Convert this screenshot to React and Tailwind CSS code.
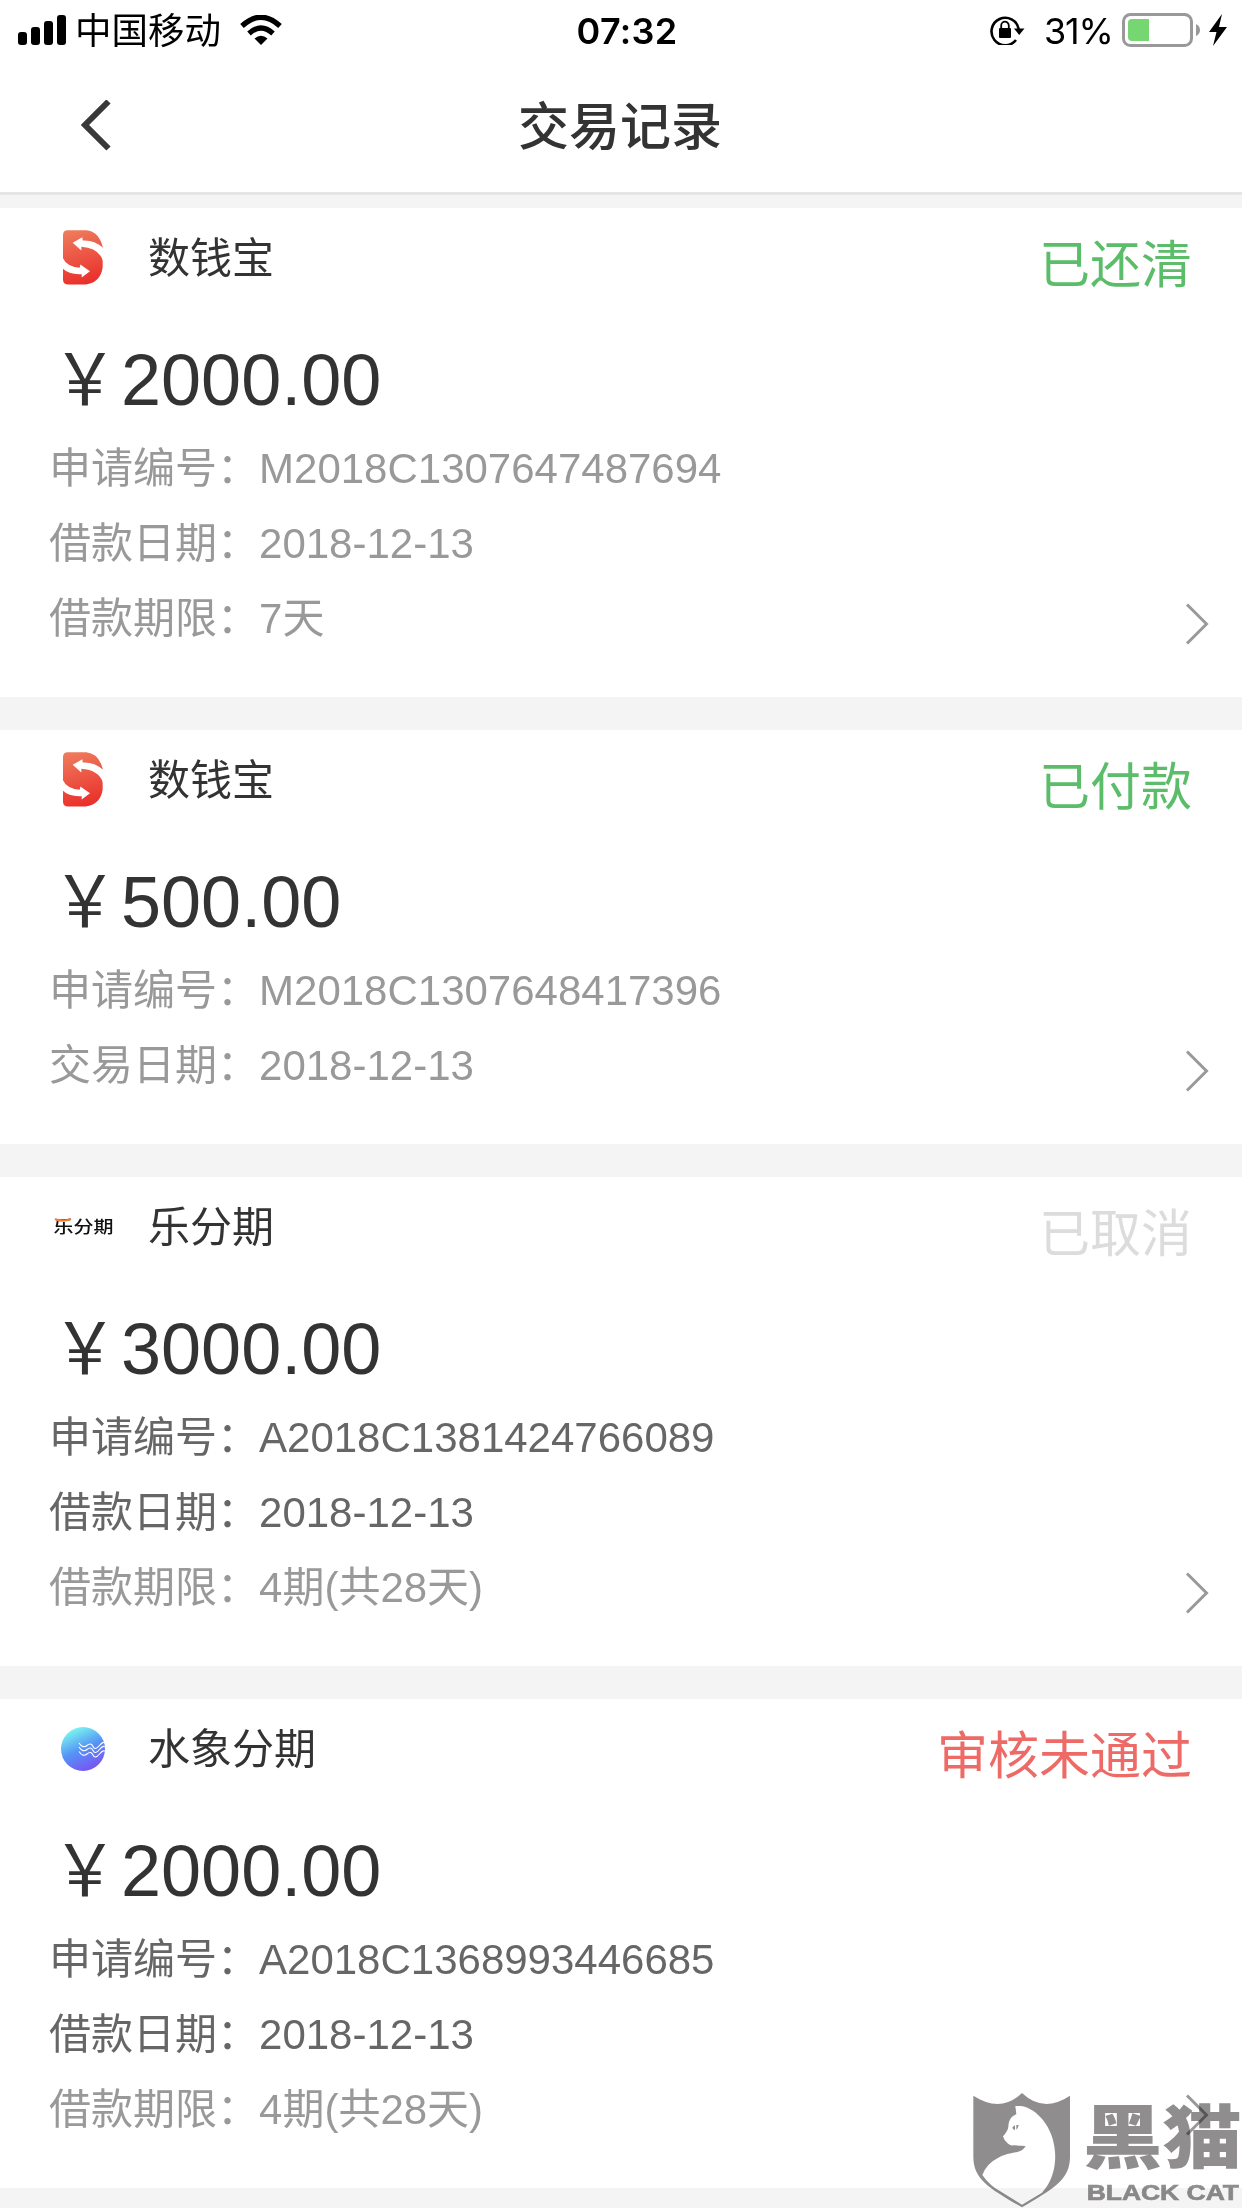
const records = [
  {
    name: '数钱宝',
    logo: 'shuqianbao',
    status: '已还清',
    statusColor: 'text-[#5bbd6a]',
    amount: '2000.00',
    rows: [
      { label: '申请编号', value: 'M2018C1307647487694' },
      { label: '借款日期', value: '2018-12-13' },
      { label: '借款期限', value: '7天' },
    ],
  },
  {
    name: '数钱宝',
    logo: 'shuqianbao',
    status: '已付款',
    statusColor: 'text-[#5bbd6a]',
    amount: '500.00',
    rows: [
      { label: '申请编号', value: 'M2018C1307648417396' },
      { label: '交易日期', value: '2018-12-13' },
    ],
  },
  {
    name: '乐分期',
    logo: 'lefenqi',
    status: '已取消',
    statusColor: 'text-[#dcdcdc]',
    amount: '3000.00',
    rows: [
      { label: '申请编号', value: 'A2018C1381424766089', dark: true },
      { label: '借款日期', value: '2018-12-13', dark: true },
      { label: '借款期限', value: '4期(共28天)' },
    ],
  },
  {
    name: '水象分期',
    logo: 'shuixiang',
    status: '审核未通过',
    statusColor: 'text-[#ed6a66]',
    amount: '2000.00',
    rows: [
      { label: '申请编号', value: 'A2018C1368993446685', dark: true },
      { label: '借款日期', value: '2018-12-13', dark: true },
      { label: '借款期限', value: '4期(共28天)' },
    ],
  },
];

function ShuqianbaoLogo() {
  return (
    <svg width="40" height="55" viewBox="0 0 120 164">
      <defs>
        <linearGradient id="sqb" x1="0.3" y1="0" x2="0.5" y2="1">
          <stop offset="0" stopColor="#ee7a5c" />
          <stop offset="1" stopColor="#ea2f2a" />
        </linearGradient>
      </defs>
      <path
        d="M14 0H70Q108 4 119 50V112Q112 158 68 163H16Q0 163 0 148V14Q0 0 14 0Z"
        fill="url(#sqb)"
      />
      <path d="M29 38L58 21L59 31Q94 29 120 53V92Q108 54 55 50V61Z" fill="#fff" />
      <path d="M81 123L56 142V132Q18 134 0 116V84Q10 108 50 113L52 103Z" fill="#fff" />
    </svg>
  );
}

function LefenqiLogo() {
  return (
    <svg className="overflow-visible" width="60" height="28" viewBox="0 0 60 28">
      <text
        transform="translate(0.5 20) scale(1 0.84)"
        fontSize="20"
        fontWeight="500"
        fill="#111"
        fontFamily='"Noto Sans CJK SC", sans-serif'
      >
        乐分期
      </text>
      <path d="M2 6Q9 9.500 18 6" stroke="#f47b30" strokeWidth="2" fill="none" />
    </svg>
  );
}

function ShuixiangLogo() {
  return (
    <svg width="44" height="44" viewBox="0 0 44 44">
      <defs>
        <linearGradient id="sx" x1="0.25" y1="0.02" x2="0.7" y2="1">
          <stop offset="0" stopColor="#7cfbf0" />
          <stop offset="0.5" stopColor="#5593f6" />
          <stop offset="1" stopColor="#7c4ff3" />
        </linearGradient>
        <clipPath id="sxClip">
          <circle cx="22" cy="22" r="22" />
        </clipPath>
      </defs>
      <circle cx="22" cy="22" r="22" fill="url(#sx)" />
      <g clipPath="url(#sxClip)" stroke="#fff" strokeWidth="1.1" fill="none">
        <path d="M18 16Q22 22 26 18.500T32 19.500T38.500 18.500T45 17" />
        <path d="M18 20Q22 26 26 22.500T32 23.500T38.500 22.500T45 21" />
        <path d="M18 24.500Q22 30.500 26 27T32 28T38.500 27T45 25.500" />
      </g>
    </svg>
  );
}

const logos = {
  shuqianbao: <ShuqianbaoLogo />,
  lefenqi: <LefenqiLogo />,
  shuixiang: <ShuixiangLogo />,
};

function StatusBar() {
  return (
    <div className="flex h-[60px] items-start text-black">
      <div className="flex w-[480px] items-start pl-[18px]">
        <div className="mt-[15px] flex h-[30px] items-end gap-1">
          <div className="h-[13px] w-[9px] rounded-[3px] bg-black"></div>
          <div className="h-[18px] w-[9px] rounded-[3px] bg-black"></div>
          <div className="h-6 w-[9px] rounded-[3px] bg-black"></div>
          <div className="h-[30px] w-[9px] rounded-[3px] bg-black"></div>
        </div>
        <span className="ml-[9px] w-[144px] text-[36.500px] leading-[64px] whitespace-nowrap">中国移动</span>
        <svg className="mt-[15px] ml-[21px]" width="42" height="30" viewBox="0 0 42 30">
          <path d="M2 11Q21 -6.500 40 11" stroke="#000" strokeWidth="5.200" fill="none" />
          <path d="M9 18.500Q21 7.500 33 18.500" stroke="#000" strokeWidth="5.200" fill="none" />
          <path d="M14.500 23.500Q21 18 27.500 23.500L21 30Z" fill="#000" />
        </svg>
      </div>
      <div className="w-[294px] text-center font-[Inter] text-[36px] leading-[63px] font-semibold tracking-[0.3px]">
        07:32
      </div>
      <div className="flex flex-1 items-start justify-end pr-[14px]">
        <svg className="mt-[15px]" width="35" height="30" viewBox="0 0 35 30">
          <path d="M26 25A13.700 13.700 0 1 1 28.700 14" stroke="#000" strokeWidth="2.600" fill="none" />
          <path d="M24 13.500H34.500L29.200 20Z" fill="#000" />
          <rect x="9" y="13" width="12" height="10" rx="1" fill="#000" />
          <path d="M11.200 14V10.500A3.800 3.800 0 0 1 18.800 10.500V14" stroke="#000" strokeWidth="1.800" fill="none" />
        </svg>
        <span className="ml-[19px] w-[69px] font-[Inter] text-[36px] leading-[63px] tracking-[-1.2px]">31%</span>
        <svg className="mt-[13px] ml-[9px]" width="106" height="34" viewBox="0 0 106 34">
          <rect x="1.500" y="1.500" width="68" height="31" rx="7" stroke="#999" strokeWidth="3" fill="none" />
          <path d="M27 6V28H10Q6 28 6 24V10Q6 6 10 6Z" fill="#76d672" />
          <path d="M74 11Q78 13 78 17T74 23Z" fill="#999" />
          <path d="M100 1L87 19H94.500L91 33L105 14H97Z" fill="#000" />
        </svg>
      </div>
    </div>
  );
}

function NavBar() {
  return (
    <div className="flex h-[132px] items-start">
      <div className="flex h-[132px] w-[200px] items-center pl-[81px]">
        <svg width="31" height="52" viewBox="0 0 31 52">
          <path d="M27.500 1.500L4 25L27.500 48.500" stroke="#383938" strokeWidth="6" fill="none" />
        </svg>
      </div>
      <h1 className="flex-1 text-center text-[51px] leading-[135px] font-medium text-[#333]">交易记录</h1>
      <div className="w-[202px]"></div>
    </div>
  );
}

function RecordCard({ record }) {
  return (
    <div className="relative bg-white pb-[41px] pl-[49px]">
      <div className="flex h-[130px] items-start pr-[50px]">
        <div className="flex h-[99px] w-[68px] shrink-0 items-center justify-center">{logos[record.logo]}</div>
        <span className="ml-[31px] text-[42px] leading-[102px] text-[#333]">{record.name}</span>
        <span className={`ml-auto text-[51px] leading-[115px] ${record.statusColor}`}>{record.status}</span>
      </div>
      <div className="flex h-[93px] text-[72px] leading-[84px] text-[#333]">
        <span className="scale-x-[0.9]">￥</span>
        <span>{record.amount}</span>
      </div>
      {record.rows.map((row) => (
        <div
          key={row.label}
          className={`h-[75px] text-[42px] leading-[75px] ${row.dark ? 'text-[#666]' : 'text-[#999]'}`}
        >
          {row.label}：{row.value}
        </div>
      ))}
      <svg className="absolute right-[33px] bottom-[51px]" width="24" height="44" viewBox="0 0 24 44">
        <path d="M2 2.500L21.500 22L2 41.500" stroke="#999" strokeWidth="3" fill="none" />
      </svg>
    </div>
  );
}

// Complaint platform badge in the bottom right corner
function Watermark() {
  return (
    <svg
      className="absolute right-0 bottom-0 mix-blend-multiply"
      width="302"
      height="148"
      viewBox="0 0 906 444"
    >
      <path
        fillRule="evenodd"
        fill="#908d8e"
        d="M100 107Q182 160 246 99Q310 160 390 107V290C390 360 340 385 246 442C150 385 100 360 100 290Z
           M127 345C140 363 150 372 165 384L246 434L306 398C350 350 346 290 345 275C340 200 290 145 243 138L226 138L229 163C212 170 206 182 205 200Q204 212 189 229Q192 240 200 247Q208 258 222 256L257 258C240 285 220 270 175 293Q140 310 127 345Z"
      />
      <path d="M217 203Q222 193 236 195Q234 208 226 210Q219 210 217 203Z" fill="#908d8e" />
      <path d="M227 195V210" stroke="#fff" strokeWidth="4" />
      <text
        x="429"
        y="309"
        fontSize="208"
        fontWeight="900"
        fill="#908d8e"
        textLength="477"
        lengthAdjust="spacingAndGlyphs"
        fontFamily='"Noto Sans CJK SC", sans-serif'
      >
        黑猫
      </text>
      <text
        x="440"
        y="420"
        fontSize="68"
        fontWeight="700"
        fill="#908d8e"
        stroke="#908d8e"
        strokeWidth="2"
        textLength="457"
        lengthAdjust="spacingAndGlyphs"
        fontFamily='"Liberation Sans", sans-serif'
      >
        BLACK CAT
      </text>
    </svg>
  );
}

export default function App() {
  return (
    <div className="relative h-[2208px] w-[1242px] overflow-hidden bg-[#f4f4f4] font-['Liberation_Sans','Noto_Sans_CJK_SC',sans-serif]">
      <div className="h-[195px] border-b-[3px] border-[#e5e5e5] bg-white">
        <StatusBar />
        <NavBar />
      </div>
      <div className="mt-[13px] flex flex-col gap-[33px]">
        {records.map((record, i) => (
          <RecordCard key={i} record={record} />
        ))}
      </div>
      <Watermark />
    </div>
  );
}
